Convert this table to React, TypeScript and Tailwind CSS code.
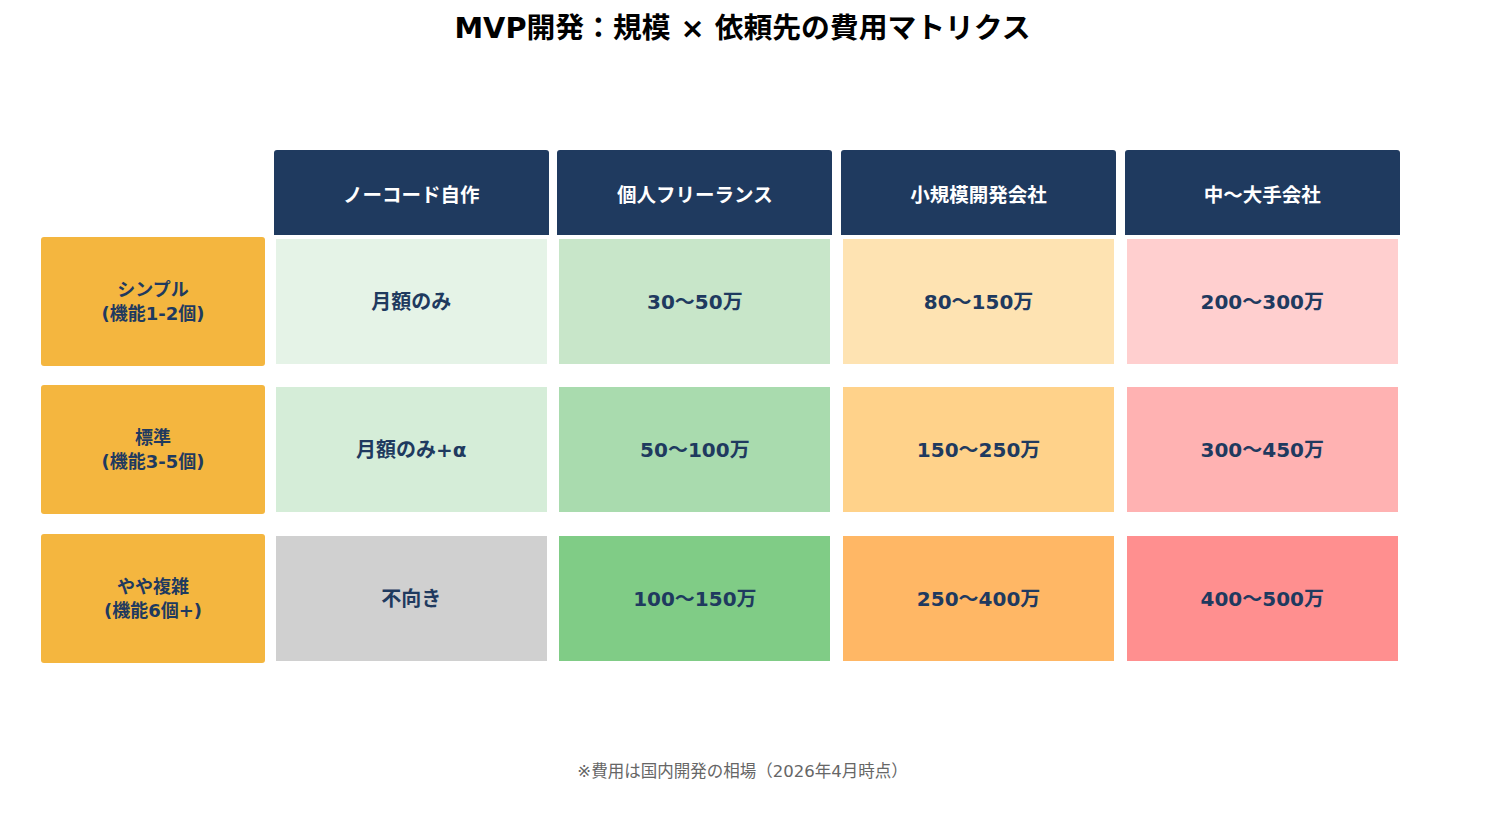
const headers = ["ノーコード自作", "個人フリーランス", "小規模開発会社", "中〜大手会社"];

const rows = [
  {
    label: ["シンプル", "(機能1-2個)"],
    cells: [
      { text: "月額のみ", bg: "bg-[#e5f3e7]" },
      { text: "30〜50万", bg: "bg-[#c8e6c9]" },
      { text: "80〜150万", bg: "bg-[#fee3b2]" },
      { text: "200〜300万", bg: "bg-[#ffcfcf]" },
    ],
  },
  {
    label: ["標準", "(機能3-5個)"],
    cells: [
      { text: "月額のみ+α", bg: "bg-[#d5edd8]" },
      { text: "50〜100万", bg: "bg-[#a9dbae]" },
      { text: "150〜250万", bg: "bg-[#ffd28a]" },
      { text: "300〜450万", bg: "bg-[#ffb2b2]" },
    ],
  },
  {
    label: ["やや複雑", "(機能6個+)"],
    cells: [
      { text: "不向き", bg: "bg-[#d0d0d0]" },
      { text: "100〜150万", bg: "bg-[#80cc86]" },
      { text: "250〜400万", bg: "bg-[#ffb765]" },
      { text: "400〜500万", bg: "bg-[#ff8f8f]" },
    ],
  },
];

const rowGap = ["mt-[2px]", "mt-[19px]", "mt-[20px]"];

function App() {
  return (
    <div
      className="relative h-[824px] w-[1485px] overflow-hidden bg-white"
      style={{ fontFamily: '"DejaVu Sans", "Noto Sans CJK JP", sans-serif' }}
    >
      <h1 className="pt-[11px] text-center text-[28.8px] font-bold leading-[34px] text-black">
        MVP開発：規模 × 依頼先の費用マトリクス
      </h1>

      <div className="ml-[41px] mt-[105px] grid grid-cols-[224px_275px_275px_275px_275px] gap-x-[8.7px]">
        <div />
        {headers.map((h) => (
          <div
            key={h}
            className="flex h-[85px] items-center justify-center rounded-t-[3px] bg-[#1f3a5f] pt-[6px] text-[19.5px] font-bold text-white"
          >
            {h}
          </div>
        ))}

        {rows.map((row, i) => (
          <div key={i} className="contents">
            <div
              className={`flex h-[129px] flex-col items-center justify-center rounded-[3px] bg-[#f4b63f] text-[18px] font-bold leading-[24px] text-[#1f3a5f] ${rowGap[i]}`}
            >
              <span>{row.label[0]}</span>
              <span>{row.label[1]}</span>
            </div>
            {row.cells.map((c) => (
              <div
                key={c.text}
                className={`flex h-[129px] items-center justify-center border-2 border-white text-[20px] font-bold text-[#1f3a5f] ${c.bg} ${rowGap[i]}`}
              >
                {c.text}
              </div>
            ))}
          </div>
        ))}
      </div>

      <p className="mt-[99px] text-center text-[16.5px] leading-[20px] text-[#666666]">
        ※費用は国内開発の相場（2026年4月時点）
      </p>
    </div>
  );
}

export default App;
